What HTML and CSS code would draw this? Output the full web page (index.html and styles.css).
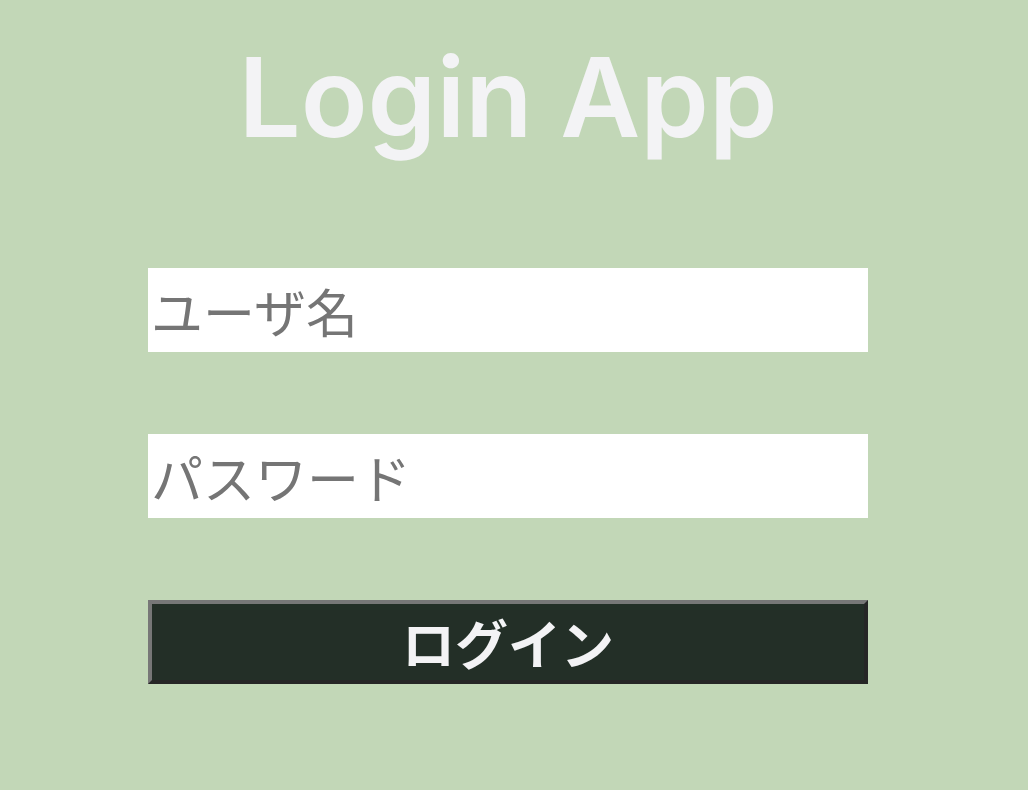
FILE: index.html
```html
<!DOCTYPE html>
<html lang="ja">
<head>
<meta charset="utf-8">
<title>Login App</title>
<link rel="stylesheet" href="styles.css">
</head>
<body>
<main class="page">
  <h1 class="title">Login App</h1>
  <form class="form">
    <input class="field" type="text" placeholder="ユーザ名">
    <input class="field" type="password" placeholder="パスワード">
    <button class="submit" type="button">ログイン</button>
  </form>
</main>
</body>
</html>
```
FILE: styles.css
```css
html, body {
  margin: 0;
  padding: 0;
  background: #c2d7b7;
}
body {
  font-family: "Noto Sans CJK JP", "Noto Sans", sans-serif;
}
.page {
  width: 1016px;
  display: flex;
  flex-direction: column;
  align-items: center;
  padding-top: 43px;
}
.title {
  margin: 0;
  font-family: Inter, "Noto Sans", sans-serif;
  font-size: 110px;
  line-height: 108px;
  font-weight: 600;
  color: #f3f3f5;
  letter-spacing: 0;
}
.form {
  margin-top: 117px;
  width: 720px;
  display: flex;
  flex-direction: column;
  gap: 82px;
}
.field {
  box-sizing: border-box;
  height: 84px;
  width: 720px;
  margin: 0;
  border: none;
  outline: none;
  padding: 0 3px;
  background: #ffffff;
  font-family: "Noto Sans CJK JP", sans-serif;
  font-size: 52px;
  color: #333;
}
.field::placeholder {
  color: #757575;
}
.submit {
  box-sizing: border-box;
  height: 84px;
  width: 720px;
  margin: 0;
  border: 4px solid;
  border-color: #777 #262626 #262626 #777;
  background: #232f27;
  color: #f3f3f5;
  font-family: "Noto Sans CJK JP", sans-serif;
  font-size: 53px;
  font-weight: 700;
  padding: 0;
  line-height: 1;
}
```
